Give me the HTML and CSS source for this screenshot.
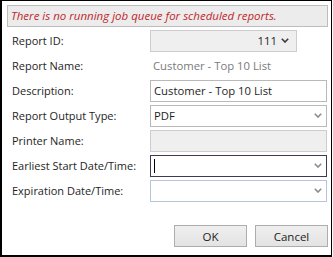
FILE: index.html
```html
<!DOCTYPE html>
<html lang="en">
<head>
    <meta charset="UTF-8">
    <title>Schedule Report</title>
    <link rel="stylesheet" href="styles.css">
</head>
<body>

<div class="dialog">
    <div class="banner">There is no running job queue for scheduled reports.</div>

    <div class="form">
        <div class="label">Report ID:</div>
        <div class="field">
            <div class="box readonly short">
                <span class="value right">111</span>
                <svg class="chevron dark" width="8" height="5" viewBox="0 0 8 5"><polyline points="0.8,0.8 4,4 7.2,0.8" fill="none" stroke="currentColor" stroke-width="1.6"/></svg>
            </div>
        </div>

        <div class="label">Report Name:</div>
        <div class="field">
            <span class="plain">Customer - Top 10 List</span>
        </div>

        <div class="label">Description:</div>
        <div class="field">
            <div class="box">
                <span class="value">Customer - Top 10 List</span>
            </div>
        </div>

        <div class="label">Report Output Type:</div>
        <div class="field">
            <div class="box">
                <span class="value">PDF</span>
                <svg class="chevron" width="8" height="5" viewBox="0 0 8 5"><polyline points="0.8,0.8 4,4 7.2,0.8" fill="none" stroke="currentColor" stroke-width="1.6"/></svg>
            </div>
        </div>

        <div class="label">Printer Name:</div>
        <div class="field">
            <div class="box readonly"></div>
        </div>

        <div class="label">Earliest Start Date/Time:</div>
        <div class="field">
            <div class="box focused">
                <span class="caret"></span>
                <span class="value"></span>
                <svg class="chevron" width="8" height="5" viewBox="0 0 8 5"><polyline points="0.8,0.8 4,4 7.2,0.8" fill="none" stroke="currentColor" stroke-width="1.6"/></svg>
            </div>
        </div>

        <div class="label">Expiration Date/Time:</div>
        <div class="field">
            <div class="box hover">
                <span class="value"></span>
                <svg class="chevron" width="8" height="5" viewBox="0 0 8 5"><polyline points="0.8,0.8 4,4 7.2,0.8" fill="none" stroke="currentColor" stroke-width="1.6"/></svg>
            </div>
        </div>
    </div>

    <div class="buttons">
        <button class="btn">OK</button>
        <button class="btn">Cancel</button>
    </div>
</div>

</body>
</html>
```

FILE: styles.css
```css
body {
    margin: 0;
    padding: 0;
    background: white;
    font-family: "Open Sans", "Noto Sans", Arial, sans-serif;
    font-size: 11px;
    color: #1e1e1e;
}
.dialog {
    width: 332px;
    height: 257px;
    box-sizing: border-box;
    border-style: solid;
    border-color: #000;
    border-width: 1px 1px 2px 2px;
    padding: 4px 0 0 5px;
}
.banner {
    width: 321px;
    height: 22px;
    box-sizing: border-box;
    background-color: #ececec;
    border: 1px solid #bdbdbd;
    color: #c0282d;
    font-style: italic;
    font-size: 11.5px;
    line-height: 20px;
    padding-left: 3px;
    white-space: nowrap;
}
.form {
    display: grid;
    grid-template-columns: 143px 177px;
    grid-auto-rows: 25px;
    margin-top: 1px;
}
.label {
    display: flex;
    align-items: center;
    padding-left: 5px;
    white-space: nowrap;
}
.field {
    display: flex;
    align-items: center;
}
.box {
    display: flex;
    align-items: center;
    width: 100%;
    height: 22px;
    box-sizing: border-box;
    border: 1px solid #b9b9b9;
    background: white;
    padding: 0 3px;
    font-size: 11.3px;
}
.box.short {
    width: 147px;
}
.box.readonly {
    background-color: #efefef;
    border-color: #cdcdcd;
}
.box.focused {
    border-color: #3d3a58;
}
.box.hover {
    border-color: #b6c6da;
}
.value {
    flex: 1;
}
.value.right {
    text-align: right;
    padding-right: 4px;
}
.plain {
    padding-left: 3px;
    color: #7a7a7a;
    font-size: 11.3px;
}
.chevron {
    color: #8a8a8a;
    margin-right: 1px;
}
.chevron.dark {
    color: #3a3a3a;
    margin-right: 4px;
}
.caret {
    width: 1px;
    height: 14px;
    background: #000;
}
.buttons {
    display: flex;
    justify-content: flex-end;
    gap: 8px;
    margin-top: 22px;
    width: 321px;
}
.btn {
    width: 73px;
    height: 22px;
    font-family: "Open Sans", "Noto Sans", Arial, sans-serif;
    font-size: 11.5px;
    color: #1e1e1e;
    background: linear-gradient(#efefef, #e3e3e3);
    border: 1px solid #adadad;
    padding: 0;
}
```
